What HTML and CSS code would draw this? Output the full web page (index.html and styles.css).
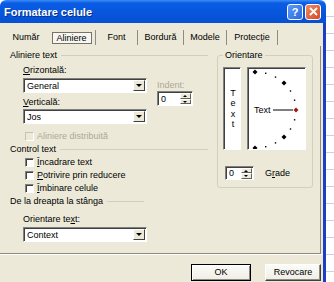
FILE: index.html
```html
<!DOCTYPE html>
<html lang="ro">
<head>
    <meta charset="UTF-8">
    <title>Formatare celule</title>
    <link rel="stylesheet" href="styles.css">
</head>
<body>
    <div class="screen">
        <div class="window">
            <div class="titlebar">
                <span class="title">Formatare celule</span>
                <span class="tb-btn help">?</span>
                <span class="tb-btn close">
                    <svg width="9" height="9" viewBox="0 0 9 9"><path d="M1 1 L8 8 M8 1 L1 8" stroke="#fff" stroke-width="1.8"/></svg>
                </span>
            </div>
            <div class="client">
                <div class="tabs">
                    <span class="tab first">Număr</span>
                    <span class="tab active"><span class="focus">Aliniere</span></span>
                    <span class="tab t3">Font</span>
                    <span class="tab t4">Bordură</span>
                    <span class="tab t5">Modele</span>
                    <span class="tab t6">Protecție</span>
                </div>

                <div class="panel">
                    <div class="left">
                        <div class="group-head">Aliniere text</div>
                        <div class="align-row">
                            <div class="fields">
                                <div class="label"><u>O</u>rizontală:</div>
                                <div class="select"><span>General</span><span class="drop"></span></div>
                                <div class="label second"><u>V</u>erticală:</div>
                                <div class="select"><span>Jos</span><span class="drop"></span></div>
                            </div>
                            <div class="indent">
                                <div class="label disabled">Indent:</div>
                                <div class="spin"><span>0</span><span class="arrows"><i class="up"></i><i class="down"></i></span></div>
                            </div>
                        </div>
                        <div class="check disabled"><span class="box"></span>Aliniere distribuită</div>

                        <div class="group-head control">Control text</div>
                        <div class="check"><span class="box"></span><u>Î</u>ncadrare text</div>
                        <div class="check"><span class="box"></span><u>P</u>otrivire prin reducere</div>
                        <div class="check"><span class="box"></span><u>Î</u>mbinare celule</div>

                        <div class="group-head short">De la dreapta la stânga</div>
                        <div class="label third">Orientare te<u>x</u>t:</div>
                        <div class="select"><span>Context</span><span class="drop"></span></div>
                    </div>

                    <fieldset class="orient">
                        <legend>Orientare</legend>
                        <div class="orient-boxes">
                            <div class="vbox">
                                <span>T</span><span>e</span><span>x</span><span>t</span>
                            </div>
                            <div class="dial">
                                <svg width="57" height="81" viewBox="0 0 57 81">
                                    <g fill="#000">
                                        <polygon points="7,1.5 9.5,4 7,6.5 4.5,4"/>
                                        <polygon points="36,12.6 38.5,15.1 36,17.6 33.5,15.1"/>
                                        <polygon points="36,66.4 38.5,68.9 36,71.4 33.5,68.9"/>
                                        <polygon points="7,77.5 9.5,80 7,82.5 4.5,80"/>
                                        <rect x="17" y="4.6" width="1.4" height="1.4"/>
                                        <rect x="26.8" y="8.4" width="1.4" height="1.4"/>
                                        <rect x="41.8" y="22.3" width="1.4" height="1.4"/>
                                        <rect x="45.9" y="31.5" width="1.4" height="1.4"/>
                                        <rect x="45.9" y="51.1" width="1.4" height="1.4"/>
                                        <rect x="41.8" y="60.3" width="1.4" height="1.4"/>
                                        <rect x="26.8" y="74.2" width="1.4" height="1.4"/>
                                        <rect x="17" y="78" width="1.4" height="1.4"/>
                                    </g>
                                    <text x="6" y="45" font-size="9" font-family="Liberation Sans, Arial, sans-serif">Text</text>
                                    <line x1="25" y1="42" x2="45" y2="42" stroke="#000" stroke-width="1"/>
                                    <polygon points="48,39.5 50.5,42 48,44.5 45.5,42" fill="#a01818"/>
                                </svg>
                            </div>
                        </div>
                        <div class="degree-row">
                            <div class="spin small"><span>0</span><span class="arrows"><i class="up"></i><i class="down"></i></span></div>
                            <span class="grade">G<u>r</u>ade</span>
                        </div>
                    </fieldset>
                </div>

                <div class="buttons">
                    <span class="btn default">OK</span>
                    <span class="btn">Revocare</span>
                </div>
            </div>
        </div>
        <div class="backdrop"></div>
    </div>
</body>
</html>
```

FILE: styles.css
```css
body {
    margin: 0;
    background-color: #fff;
    font-family: "Liberation Sans", Arial, sans-serif;
    font-size: 9px;
    color: #000;
}
.screen {
    display: flex;
    height: 282px;
    overflow: hidden;
}
.window {
    width: 326px;
    flex-shrink: 0;
}
.backdrop {
    flex: 1;
    background: repeating-linear-gradient(to bottom, #fff 0, #fff 16px, #c9d3e6 16px, #c9d3e6 17px);
}

/* Title bar */
.titlebar {
    height: 23px;
    display: flex;
    align-items: center;
    padding-left: 4px;
    background: linear-gradient(to bottom, #3d8ef5 0, #0b5de6 3px, #0756dc 55%, #0650d4 100%);
    border-radius: 6px 6px 0 0;
}
.title {
    color: #fff;
    font-size: 11px;
    font-weight: bold;
    flex: 1;
    text-shadow: 1px 1px #0a2f8a;
}
.tb-btn {
    width: 14px;
    height: 14px;
    border: 1px solid #fff;
    border-radius: 3px;
    display: flex;
    align-items: center;
    justify-content: center;
    color: #fff;
    font-weight: bold;
    font-size: 11px;
}
.help {
    background: linear-gradient(135deg, #5b9bf7, #2c68e0);
    margin-right: 2px;
}
.close {
    background: linear-gradient(135deg, #ee8a63, #d84a22);
    margin-right: 5px;
}

/* Client area */
.client {
    background-color: #ece9d8;
    border-right: 3px solid #1a3fc4;
    height: 259px;
}
.tabs {
    height: 23px;
    display: flex;
    padding: 7px 0 0 4px;
    box-sizing: border-box;
}
.tab {
    height: 15px;
    line-height: 15px;
    text-align: center;
    border-right: 1px solid #8e8c80;
    box-sizing: border-box;
}
.tab.first {
    width: 44px;
    border-right: none;
}
.tab.active {
    width: 48px;
    display: flex;
    align-items: center;
    justify-content: center;
}
.focus {
    width: 40px;
    height: 12px;
    line-height: 11px;
    margin-top: 1px;
    border: 1px solid #75736a;
    box-sizing: border-box;
    background-color: #f7f6f0;
}
.t3 { width: 42px; }
.t4 { width: 46px; }
.t5 { width: 43px; }
.t6 { width: 51px; }

.panel {
    display: flex;
    width: 321px;
    height: 208px;
    box-sizing: border-box;
    border-right: 1px solid #8e8c80;
    border-bottom: 1px solid #8e8c80;
}
.left {
    width: 217px;
    padding: 3px 0 0 10px;
    box-sizing: border-box;
}
.group-head {
    display: flex;
    align-items: center;
    height: 12px;
    margin-right: 9px;
}
.group-head::after {
    content: "";
    flex: 1;
    margin-left: 4px;
    border-top: 1px solid #d0d0bf;
}
.group-head.control {
    margin-top: 1px;
}
.group-head.short {
    margin-top: 1px;
}
.group-head.short::after {
    flex: none;
    width: 37px;
}
.label {
    height: 12px;
    line-height: 12px;
    margin: 3px 0 2px 13px;
}
.label.second {
    margin-top: 3px;
    margin-bottom: 1px;
}
.label.third {
    margin-top: 6px;
    margin-bottom: 2px;
}
.disabled {
    color: #aca899;
}
.align-row {
    display: flex;
}
.fields {
    width: 137px;
}
.select {
    width: 124px;
    height: 15px;
    margin-left: 13px;
    display: flex;
    align-items: center;
    justify-content: space-between;
    background-color: #fff;
    border: 1px solid;
    border-color: #808080 #fff #fff #808080;
    box-shadow: inset 1px 1px #404040;
    box-sizing: border-box;
    padding-left: 3px;
}
.drop {
    width: 12px;
    height: 11px;
    margin-right: 1px;
    background-color: #ece9d8;
    border: 1px solid;
    border-color: #fff #404040 #404040 #fff;
    box-sizing: border-box;
    position: relative;
}
.drop::after {
    content: "";
    position: absolute;
    left: 2px;
    top: 3px;
    border-left: 3px solid transparent;
    border-right: 3px solid transparent;
    border-top: 3px solid #000;
}
.indent {
    margin-left: 10px;
    padding-top: 15px;
}
.indent .label {
    margin: 3px 0 0 0;
}
.spin {
    width: 36px;
    height: 15px;
    display: flex;
    align-items: center;
    justify-content: space-between;
    background-color: #fff;
    border: 1px solid;
    border-color: #808080 #fff #fff #808080;
    box-shadow: inset 1px 1px #404040;
    box-sizing: border-box;
    padding-left: 3px;
}
.spin.small {
    width: 29px;
    height: 14px;
}
.arrows {
    width: 11px;
    height: 11px;
    margin-right: 1px;
    display: flex;
    flex-direction: column;
    background-color: #ece9d8;
}
.arrows i {
    flex: 1;
    position: relative;
    border: 1px solid;
    border-color: #fff #606060 #606060 #fff;
}
.arrows i::after {
    content: "";
    position: absolute;
    left: 2px;
    border-left: 2px solid transparent;
    border-right: 2px solid transparent;
}
.arrows .up::after {
    top: 1px;
    border-bottom: 2px solid #000;
}
.arrows .down::after {
    top: 1px;
    border-top: 2px solid #000;
}

.check {
    display: flex;
    align-items: center;
    height: 12px;
    margin: 1px 0 0 15px;
}
.check.disabled {
    margin-top: 6px;
}
.box {
    width: 9px;
    height: 9px;
    margin-right: 3px;
    background-color: #fff;
    border: 1px solid;
    border-color: #808080 #fff #fff #808080;
    box-shadow: inset 1px 1px #404040;
    box-sizing: border-box;
}
.check.disabled .box {
    background-color: #ece9d8;
    border-color: #c5c2b2 #fff #fff #c5c2b2;
    box-shadow: none;
}

/* Orientation group */
.orient {
    width: 96px;
    height: 139px;
    margin: 3px 0 0 0;
    padding: 6px 5px 0 5px;
    border: 1px solid #d0d0bf;
    border-radius: 3px;
    box-sizing: border-box;
}
.orient legend {
    padding: 0 2px;
    line-height: 12px;
}
.orient-boxes {
    display: flex;
    gap: 6px;
    height: 83px;
}
.vbox, .dial {
    background-color: #fff;
    border: 1px solid;
    border-color: #808080 #fff #fff #808080;
    box-shadow: inset 1px 0 #404040, inset 0 1px #404040;
    box-sizing: border-box;
}
.vbox {
    width: 18px;
    display: flex;
    flex-direction: column;
    align-items: center;
    justify-content: center;
    line-height: 10.5px;
    padding-left: 2px;
}
.dial {
    width: 59px;
    overflow: hidden;
}
.dial svg {
    display: block;
}
.degree-row {
    display: flex;
    align-items: center;
    margin: 16px 0 0 2px;
}
.grade {
    margin-left: 11px;
}

/* Buttons */
.buttons {
    display: flex;
    justify-content: flex-end;
    gap: 14px;
    padding: 9px 2px 0 0;
    border-top: 1px solid #fff;
}
.btn {
    height: 17px;
    line-height: 15px;
    text-align: center;
    width: 56px;
    background: linear-gradient(to bottom, #fbfbf8, #efede5);
    border: 1px solid;
    border-color: #fff #404040 #404040 #fff;
    box-shadow: inset -1px -1px #8e8c80;
    box-sizing: border-box;
}
.btn.default {
    width: 60px;
    border-color: #000;
    box-shadow: inset 1px 1px #fff, inset -1px -1px #8e8c80;
}
```
